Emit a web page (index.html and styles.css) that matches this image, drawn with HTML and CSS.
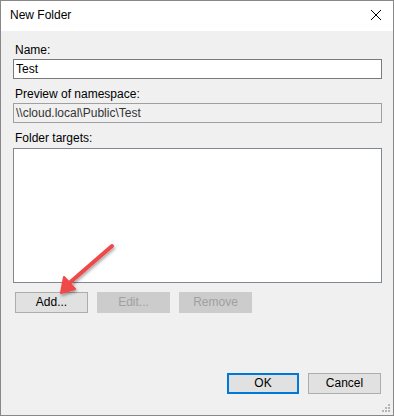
FILE: index.html
```html
<!DOCTYPE html>
<html>
  <head>
    <meta charset="utf-8">
    <title>New Folder</title>
    <link rel="stylesheet" href="styles.css">
  </head>
  <body>
    <div class="win">
      <div class="titlebar">
        <div class="ttl">New Folder</div>
        <svg class="close" width="12" height="12" viewBox="0 0 12 12">
          <path d="M1 1 L11 11 M11 1 L1 11" stroke="#000" stroke-width="1"/>
        </svg>
      </div>
      <div class="body">
        <div class="lbl">Name:</div>
        <div class="box">Test</div>
        <div class="lbl gap">Preview of namespace:</div>
        <div class="box ro">\\cloud.local\Public\Test</div>
        <div class="lbl gap">Folder targets:</div>
        <div class="list"></div>
        <div class="row">
          <div class="btn">Add...</div>
          <div class="btn off">Edit...</div>
          <div class="btn off">Remove</div>
        </div>
        <div class="foot">
          <div class="btn def">OK</div>
          <div class="btn">Cancel</div>
        </div>
      </div>
      <svg class="arrow" width="80" height="70" viewBox="0 0 80 70">
        <defs>
          <filter id="sh" x="-20%" y="-20%" width="150%" height="150%">
            <feDropShadow dx="1" dy="2" stdDeviation="1.5" flood-color="#000" flood-opacity="0.35"/>
          </filter>
        </defs>
        <g filter="url(#sh)">
          <path d="M63 8 L18 47" stroke="#f04848" stroke-width="4" stroke-linecap="round"/>
          <path d="M12 55 L15 39 L26 51 Z" fill="#f04848" stroke="#f04848" stroke-width="2" stroke-linejoin="round"/>
        </g>
      </svg>
      <svg class="grip" width="10" height="10" viewBox="0 0 10 10">
        <rect x="7" y="1" width="2" height="2" fill="#b5b5b5"/>
        <rect x="4" y="4" width="2" height="2" fill="#b5b5b5"/>
        <rect x="7" y="4" width="2" height="2" fill="#b5b5b5"/>
        <rect x="1" y="7" width="2" height="2" fill="#b5b5b5"/>
        <rect x="4" y="7" width="2" height="2" fill="#b5b5b5"/>
        <rect x="7" y="7" width="2" height="2" fill="#b5b5b5"/>
      </svg>
    </div>
  </body>
</html>
```

FILE: styles.css
```css
body {
  margin: 0;
  font-family: "Liberation Sans", Arial, sans-serif;
  font-size: 12px;
  color: #000;
}
.win {
  position: relative;
  width: 394px;
  height: 416px;
  box-sizing: border-box;
  border: 1px solid #888888;
  background: #f0f0f0;
  display: flex;
  flex-direction: column;
}
.titlebar {
  height: 30px;
  background: #ffffff;
  display: flex;
  align-items: center;
  justify-content: space-between;
  padding: 0 10px 0 9px;
}
.ttl {
  font-size: 12px;
  margin-top: -2px;
}
.close {
  margin-right: 1px;
  margin-top: -3px;
}
.body {
  flex: 1;
  display: flex;
  flex-direction: column;
  padding: 12px 11px 0 12px;
}
.lbl {
  height: 15px;
  line-height: 15px;
  padding-left: 2px;
  margin-bottom: 1px;
}
.lbl.gap {
  margin-top: 8px;
}
.box {
  height: 20px;
  box-sizing: border-box;
  border: 1px solid #7a7a7a;
  background: #ffffff;
  line-height: 18px;
  padding-left: 2px;
}
.box.ro {
  background: #f0f0f0;
  border-color: #a0a0a0;
  color: #333;
}
.list {
  height: 135px;
  box-sizing: border-box;
  border: 1px solid #828790;
  background: #ffffff;
  margin-top: 1px;
}
.row {
  display: flex;
  gap: 9px;
  margin-top: 9px;
  padding-left: 2px;
}
.btn {
  width: 73px;
  height: 21px;
  box-sizing: border-box;
  border: 1px solid #adadad;
  background: #e1e1e1;
  text-align: center;
  line-height: 19px;
}
.btn.off {
  border-color: #cccccc;
  background: #cccccc;
  color: #a0a0a0;
}
.foot {
  display: flex;
  justify-content: flex-end;
  gap: 9px;
  margin-top: 60px;
  padding-right: 1px;
}
.btn.def {
  width: 72px;
  border: 2px solid #0078d7;
  line-height: 17px;
}
.arrow {
  position: absolute;
  left: 48px;
  top: 237px;
}
.grip {
  position: absolute;
  right: 2px;
  bottom: 2px;
}
```
